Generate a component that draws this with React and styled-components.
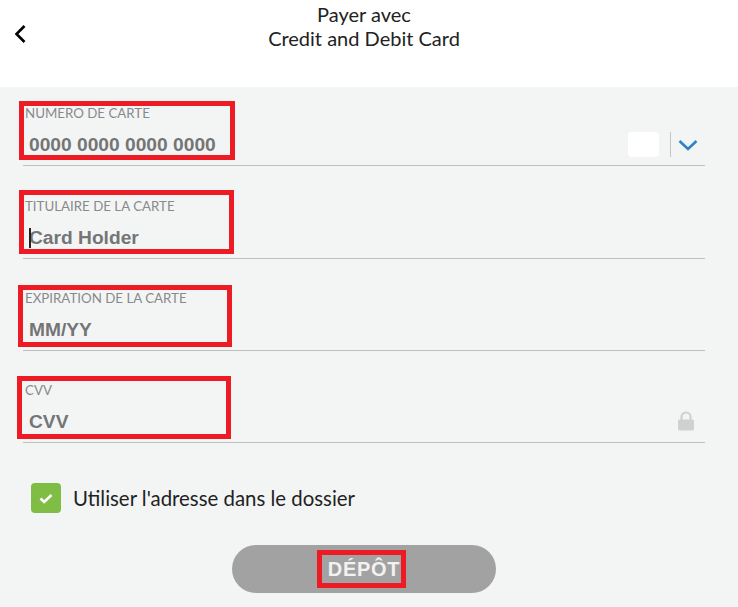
import React from "react";
import styled, { createGlobalStyle } from "styled-components";

const Global = createGlobalStyle`
  html, body { margin: 0; padding: 0; background: #f3f5f5; }
  body { font-family: Lato, "Open Sans", sans-serif; }
`;

const Page = styled.div`
  width: 738px;
  height: 607px;
  overflow: hidden;
  display: flex;
  flex-direction: column;
  background: #f3f5f5;
`;

const Header = styled.header`
  height: 87px;
  flex: none;
  background: #fff;
  position: relative;
  display: flex;
  justify-content: center;
  padding-top: 2px;
  box-sizing: border-box;
`;

const BackButton = styled.button`
  position: absolute;
  left: 11px;
  top: 21px;
  width: 18px;
  height: 26px;
  padding: 0;
  border: 0;
  background: none;
  display: flex;
`;

const Title = styled.h1`
  margin: 0;
  width: 320px;
  margin-left: -10px;
  text-align: center;
  font-size: 20px;
  line-height: 24px;
  font-weight: 400;
  color: #222;
`;

const Form = styled.main`
  flex: 1;
  padding: 14px 33px 0 23px;
  display: flex;
  flex-direction: column;
`;

const Field = styled.div`
  position: relative;
  height: 64px;
  margin-bottom: ${(p) => p.$gap}px;
  border-bottom: 1px solid #bdbfbf;
  padding-left: 2px;
  display: flex;
  flex-direction: column;
`;

const Label = styled.label`
  margin-top: ${(p) => p.$top}px;
  font-size: 13.3px;
  line-height: 14px;
  color: #88898b;
  text-transform: uppercase;
  white-space: nowrap;
`;

const Placeholder = styled.div`
  margin-top: ${(p) => p.$top}px;
  padding-left: 4px;
  font-family: "Liberation Sans", Arial, sans-serif;
  font-weight: 700;
  font-size: 19.2px;
  line-height: 22px;
  color: #757575;
  position: relative;
`;

const Caret = styled.span`
  position: absolute;
  left: 4px;
  top: 1px;
  width: 1.5px;
  height: 20px;
  background: #222;
`;

const Annotation = styled.div`
  position: absolute;
  border: 5px solid #ed1c24;
  box-sizing: border-box;
  pointer-events: none;
  left: ${(p) => p.$left}px;
  top: ${(p) => p.$top}px;
  width: ${(p) => p.$width}px;
  height: ${(p) => p.$height}px;
`;

const CardAddon = styled.div`
  position: absolute;
  right: 7px;
  top: 31px;
  display: flex;
  align-items: center;
`;

const CardChip = styled.div`
  width: 31px;
  height: 25px;
  border-radius: 4px;
  background: #fff;
`;

const Divider = styled.div`
  width: 1px;
  height: 25px;
  background: #c4c6c6;
  margin-left: 11px;
  margin-right: 7px;
`;

const LockSlot = styled.div`
  position: absolute;
  right: 10px;
  top: 33px;
  width: 18px;
  height: 20px;
`;

const CheckRow = styled.div`
  display: flex;
  align-items: center;
  margin: 40px 0 0 8px;
  gap: 12px;
`;

const CheckBox = styled.div`
  width: 30px;
  height: 30px;
  border-radius: 4px;
  background: #7fbd45;
  display: flex;
  align-items: center;
  justify-content: center;
`;

const CheckLabel = styled.span`
  font-size: 20.4px;
  line-height: 24px;
  color: #222;
`;

const ButtonRow = styled.div`
  display: flex;
  justify-content: center;
  margin-top: 32px;
`;

const Deposit = styled.button`
  position: relative;
  width: 264px;
  height: 48px;
  border: 0;
  border-radius: 24px;
  background: #a2a2a2;
  color: #f2f2f2;
  font-family: "Liberation Sans", Arial, sans-serif;
  font-weight: 700;
  font-size: 20px;
  letter-spacing: 0.7px;
  padding: 0;
`;

const fields = [
  { label: "Numero de carte", value: "0000 0000 0000 0000", gap: 28, top: 5, valueTop: 14, box: [-4, 0, 216, 59], addon: "card" },
  { label: "Titulaire de la carte", value: "Card Holder", gap: 27, top: 5, valueTop: 14, box: [-4, -4, 215, 64], caret: true },
  { label: "Expiration de la carte", value: "MM/YY", gap: 27, top: 5, valueTop: 14, box: [-5, -1, 214, 62] },
  { label: "CVV", value: "CVV", gap: 0, top: 5, valueTop: 14, box: [-6, -2, 214, 63], addon: "lock" },
];

export default function App() {
  return (
    <Page>
      <Global />
      <Header>
        <BackButton aria-label="Retour">
          <svg width="18" height="26" viewBox="0 0 18 26" fill="none">
            <path d="M13.5 5 L5.5 13 L13.5 21" stroke="#000" strokeWidth="2.6" />
          </svg>
        </BackButton>
        <Title>
          Payer avec
          <br />
          Credit and Debit Card
        </Title>
      </Header>
      <Form>
        {fields.map((f) => (
          <Field key={f.label} $gap={f.gap}>
            <Label $top={f.top}>{f.label}</Label>
            <Placeholder $top={f.valueTop}>
              {f.caret && <Caret />}
              {f.value}
            </Placeholder>
            <Annotation $left={f.box[0]} $top={f.box[1]} $width={f.box[2]} $height={f.box[3]} />
            {f.addon === "card" && (
              <CardAddon>
                <CardChip />
                <Divider />
                <svg width="20" height="12" viewBox="0 0 20 12" fill="none">
                  <path d="M1.5 2 L10 10 L18.5 2" stroke="#2b82c8" strokeWidth="2.6" />
                </svg>
              </CardAddon>
            )}
            {f.addon === "lock" && (
              <LockSlot>
                <svg width="18" height="20" viewBox="0 0 18 20" fill="none">
                  <path d="M4.5 9 V6 a4.5 4.5 0 0 1 9 0 V9" stroke="#cfd1d1" strokeWidth="2.2" />
                  <rect x="1" y="8.5" width="16" height="11" rx="1.5" fill="#cfd1d1" />
                </svg>
              </LockSlot>
            )}
          </Field>
        ))}
        <CheckRow>
          <CheckBox>
            <svg width="14" height="11" viewBox="0 0 14 11" fill="none">
              <path d="M1.5 5.5 L5.2 9 L12.5 2" stroke="#fff" strokeWidth="2.6" />
            </svg>
          </CheckBox>
          <CheckLabel>Utiliser l'adresse dans le dossier</CheckLabel>
        </CheckRow>
        <ButtonRow>
          <Deposit>
            DÉPÔT
            <Annotation $left={85} $top={5} $width={89} $height={38} />
          </Deposit>
        </ButtonRow>
      </Form>
    </Page>
  );
}
